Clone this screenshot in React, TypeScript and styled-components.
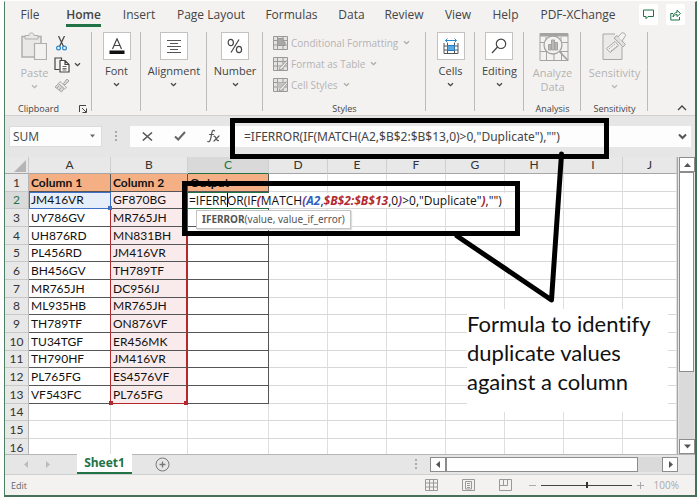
import React from "react";
import styled, { createGlobalStyle, css } from "styled-components";

const UI = '"Open Sans", "Noto Sans", sans-serif';
const CELL = 'Lato, "Open Sans", sans-serif';
const GREEN = "#217346";

const Global = createGlobalStyle`
  * { box-sizing: border-box; }
  body { margin: 0; background: #fdfdfd; font-family: ${UI}; color: #444; }
  button, input { font-family: inherit; color: inherit; }
  button { border: 0; padding: 0; background: none; }
`;

const Page = styled.main`
  position: relative;
  display: flex;
  height: 100vh;
  min-height: 480px;
  min-width: 680px;
  padding: 1px 3px 3px 4px;
  overflow: hidden;
`;

const Window = styled.div`
  flex: 1;
  min-width: 0;
  display: flex;
  flex-direction: column;
  background: #f3f2f1;
  border: 1px solid #4d8065;
  border-top-color: #f3f2f1;
  border-right: 2px solid #47705b;
  border-bottom: 2px solid #47705b;
`;

/* ---------- ribbon ---------- */

const TabRow = styled.nav`
  flex: none;
  display: flex;
  height: 30px;
  padding: 2px 10px 0 0;
`;

const Tab = styled.button<{ $w: number; $active?: boolean }>`
  flex: none;
  width: ${(p) => p.$w}px;
  height: 26px;
  display: flex;
  justify-content: center;
  font-size: 12px;
  line-height: 22px;
  white-space: nowrap;
  font-weight: ${(p) => (p.$active ? 600 : 400)};
  span {
    height: 23px;
    border-bottom: ${(p) => (p.$active ? `3px solid ${GREEN}` : "0")};
  }
`;

const TabActions = styled.div`
  margin-left: auto;
  display: flex;
  gap: 8px;
`;

const ActionButton = styled.button`
  display: grid;
  place-items: center;
  width: 19px;
  height: 21px;
  background: #fff;
  border-radius: 2px;
`;

const Ribbon = styled.div`
  flex: none;
  display: flex;
  height: 84px;
  padding-bottom: 4px;
  border-bottom: 1px solid #d2d0ce;
`;

const Group = styled.section<{ $w?: number }>`
  flex: ${(p) => (p.$w ? "none" : 1)};
  width: ${(p) => (p.$w ? `${p.$w}px` : "auto")};
  display: flex;
  flex-direction: column;
  align-items: center;
  padding-left: 1px;
  border-right: ${(p) => (p.$w ? "1px solid #bdbbb9" : "0")};
`;

const GroupBody = styled.div`
  flex: 1;
  display: flex;
`;

const GroupLabel = styled.div`
  display: flex;
  align-items: center;
  gap: 20px;
  font-size: 9px;
  line-height: 12px;
  height: 12px;
  margin-bottom: -4px;
  white-space: nowrap;
`;

const ClipGroup = styled(Group)`
  padding-left: 9px;
`;

const BigButton = styled.button<{ $off?: boolean }>`
  display: flex;
  flex-direction: column;
  align-items: center;
  font-size: 11px;
  line-height: 14px;
  color: ${(p) => (p.$off ? "#b5b3b1" : "#444")};
`;

const IconTile = styled.span<{ $plain?: boolean }>`
  display: grid;
  place-items: center;
  width: 28px;
  height: 28px;
  margin-bottom: ${(p) => (p.$plain ? 6 : 4)}px;
  background: ${(p) => (p.$plain ? "transparent" : "#fff")};
  border: ${(p) => (p.$plain ? "0" : "1px solid #c4c2c0")};
`;

const ChevronSlot = styled.span`
  height: 12px;
  display: grid;
  place-items: center;
`;

const ClipTools = styled.div`
  display: grid;
  grid-template-columns: 18px 14px;
  grid-auto-rows: 21px;
  align-items: center;
  justify-items: center;
  margin: 1px 0 0 4px;
`;

const IconButton = styled.button`
  display: grid;
  place-items: center;
`;

const Launcher = styled.button`
  display: grid;
  place-items: center;
`;

const StyleList = styled.div`
  display: flex;
  flex-direction: column;
  width: 143px;
`;

const StyleItem = styled.button`
  display: flex;
  align-items: center;
  gap: 3px;
  height: 21px;
  font-size: 10px;
  color: #b5b3b1;
  white-space: nowrap;
  svg:last-child { margin-left: 2px; }
`;

const CollapseSlot = styled.div`
  align-self: flex-end;
  margin-top: auto;
  padding: 0 8px 0 0;
`;

/* ---------- formula bar ---------- */

const FormulaBar = styled.div`
  flex: none;
  display: flex;
  align-items: center;
  height: 41px;
  padding: 0 4px 1px 4px;
  background: #e6e6e6;
`;

const NameBox = styled.div`
  display: flex;
  align-items: center;
  width: 93px;
  height: 21px;
  padding: 0 6px 0 3px;
  background: #fdfdfd;
  border: 1px solid #dcdcdc;
`;

const NameInput = styled.input`
  flex: 1;
  min-width: 0;
  padding: 0;
  border: 0;
  background: none;
  font-size: 12px;
`;

const Dots = styled.span`
  display: grid;
  place-items: center;
  width: 28px;
`;

const FormulaTools = styled.div`
  display: flex;
  justify-content: space-around;
  width: 102px;
  height: 21px;
  padding: 0 2px;
  background: #fdfdfd;
`;

const FormulaField = styled.div`
  flex: 1;
  display: flex;
  align-items: center;
  height: 21px;
  margin-left: 3px;
  padding: 0 4px 0 9px;
  background: #fdfdfd;
`;

const FormulaInput = styled.input`
  flex: 1;
  min-width: 0;
  padding: 0;
  border: 0;
  background: none;
  font-family: "Noto Sans", "Open Sans", sans-serif;
  font-size: 12px;
`;

/* ---------- sheet ---------- */

const SheetArea = styled.div`
  flex: 1;
  min-height: 0;
  display: flex;
  background: #e6e6e6;
`;

const SheetView = styled.div`
  flex: 1;
  min-width: 0;
  overflow: hidden;
  background: #fff;
  border-right: 1px solid #a6a6a6;
`;

const Grid = styled.table`
  width: 100%;
  table-layout: fixed;
  border-collapse: separate;
  border-spacing: 0;
  font-family: ${CELL};
  font-size: 12px;
  line-height: 16px;
  color: #111;
  tbody tr { height: 18px; }
  tbody tr:nth-child(3n + 2) { height: 17px; }
`;

const Col = styled.col<{ $w?: number }>`
  width: ${(p) => (p.$w ? `${p.$w}px` : "auto")};
`;

const ColHead = styled.th<{ $active?: boolean }>`
  height: 17px;
  padding: 0;
  font-weight: 400;
  color: ${(p) => (p.$active ? GREEN : "#333")};
  background: ${(p) => (p.$active ? "#d9d9d9" : "#e8e8e8")};
  border-right: 1px solid #cfcfcf;
  border-bottom: 1px solid ${(p) => (p.$active ? GREEN : "#a6a6a6")};
`;

const Corner = styled.td`
  padding: 0;
  background: #e8e8e8;
  border-right: 1px solid #c8c8c8;
  border-bottom: 1px solid #a6a6a6;
  svg { display: block; margin: 2px 2px 0 auto; }
`;

const RowHead = styled.th<{ $active?: boolean }>`
  padding: 0;
  line-height: 14px;
  font-size: 12px;
  font-weight: 400;
  color: ${(p) => (p.$active ? GREEN : "#333")};
  background: ${(p) => (p.$active ? "#dadada" : "#e8e8e8")};
  border-right: 1px solid #b5b5b5;
  border-bottom: 1px solid #c8c8c8;
`;

type CellKind = "plain" | "data" | "head" | "ref" | "range" | "edit" | "out";

const Cell = styled.td<{ $kind: CellKind; $last?: boolean }>`
  position: relative;
  padding: 0 0 0 2px;
  line-height: 14px;
  white-space: nowrap;
  border-right: 1px solid #dedede;
  border-bottom: 1px solid #d8d8d8;
  ${(p) => p.$kind !== "plain" && css`border-color: #555;`}
  ${(p) => p.$kind === "head" && css`background: #f4b084; font-weight: 700;`}
  ${(p) => p.$kind === "data" && css`border-right-color: #b3272d;`}
  ${(p) => p.$kind === "ref" && css`
    background: #e6eefa;
    border-bottom-color: #3f6fc4;
    border-right-color: #3f6fc4;
    box-shadow: inset 1px 1px #3f6fc4;
  `}
  ${(p) => p.$kind === "range" && css`
    background: #f9eaeb;
    border-right: 2px solid #b3272d;
    ${p.$last ? "border-bottom-color: #b3272d;" : ""}
  `}
  ${(p) => p.$kind === "edit" && css`
    border-bottom-color: ${GREEN};
    box-shadow: inset 0 1px ${GREEN};
  `}
`;

const Handle = styled.i<{ $c: string; $right?: boolean }>`
  position: absolute;
  bottom: -2px;
  ${(p) => (p.$right ? "right: -2px;" : "left: -2px;")}
  width: 4px;
  height: 4px;
  background: ${(p) => p.$c};
  z-index: 1;
`;

const CellEditor = styled.div`
  position: absolute;
  left: 0;
  top: 1px;
  z-index: 2;
  height: 15px;
  padding: 0 4px 0 1px;
  font-family: ${UI};
  line-height: 15px;
  background: #fff;
  white-space: nowrap;
`;

const Token = styled.span<{ $c: string }>`
  color: ${(p) => p.$c};
  font-weight: 700;
  font-style: italic;
`;

const Caret = styled.span`
  display: inline-block;
  width: 1px;
  height: 14px;
  margin-right: -1px;
  vertical-align: top;
  background: #000;
`;

const FunctionTip = styled.div`
  position: absolute;
  left: 8px;
  top: 18px;
  z-index: 3;
  padding: 0 5px 0 5px;
  height: 19px;
  font-family: "Noto Sans", "Open Sans", sans-serif;
  font-size: 10px;
  line-height: 17px;
  color: #555;
  background: #fff;
  border: 1px solid #c4c4c4;
  box-shadow: 1px 1px 1px #ddd;
`;

/* ---------- scroll bars ---------- */

const VScroll = styled.div`
  flex: none;
  display: flex;
  flex-direction: column;
  width: 17px;
  padding: 0 1px 0 1px;
`;

const HScroll = styled.div`
  display: flex;
  width: 248px;
  height: 15px;
`;

const ScrollButton = styled.button`
  flex: none;
  display: grid;
  place-items: center;
  width: 16px;
  height: 15px;
  background: #fff;
  border: 1px solid #8c8c8c;
`;

const Track = styled.div<{ $vertical?: boolean }>`
  flex: 1;
  display: flex;
  flex-direction: ${(p) => (p.$vertical ? "column" : "row")};
  background: #dadada;
`;

const Thumb = styled.div<{ $share: number }>`
  flex: 0 0 ${(p) => p.$share}%;
  background: #fff;
  border: 1px solid #8c8c8c;
`;

/* ---------- bottom bars ---------- */

const SheetBar = styled.div`
  flex: none;
  display: flex;
  align-items: center;
  height: 21px;
  padding-right: 17px;
  background: #e6e6e6;
  border-top: 1px solid #b5b5b5;
  border-bottom: 1px solid #cfcfcf;
`;

const SheetNav = styled.div`
  display: flex;
  justify-content: center;
  gap: 14px;
  width: 72px;
  padding-right: 8px;
`;

const SheetTab = styled.button`
  align-self: flex-start;
  width: 55px;
  height: 20px;
  margin-top: -1px;
  font-size: 12px;
  line-height: 18px;
  font-weight: 700;
  color: ${GREEN};
  background: #fff;
  border-bottom: 2px solid ${GREEN};
`;

const AddSheet = styled.button`
  display: grid;
  margin-left: 23px;
`;

const Spacer = styled.div`
  flex: 1;
`;

const StatusBar = styled.footer`
  flex: none;
  display: flex;
  align-items: center;
  height: 20px;
  padding: 0 16px 0 6px;
  font-size: 9px;
  color: #666;
`;

const Views = styled.div`
  display: flex;
  gap: 24px;
  margin-right: 17px;
`;

const ZoomRange = styled.input`
  appearance: none;
  width: 91px;
  height: 10px;
  margin: 0 5px;
  background: linear-gradient(#444, #444) center / 100% 1px no-repeat;
  &::-webkit-slider-thumb {
    appearance: none;
    width: 2px;
    height: 6px;
    background: #333;
  }
`;

const ZoomText = styled.span`
  width: 35px;
  text-align: right;
  font-size: 10px;
  color: #aaa;
`;

/* ---------- annotations ---------- */

const Frame = styled.div<{ $x: number; $y: number; $w: number; $h: number }>`
  position: absolute;
  left: ${(p) => p.$x}px;
  top: ${(p) => p.$y}px;
  width: ${(p) => p.$w}px;
  height: ${(p) => p.$h}px;
  border: 5px solid #000;
  pointer-events: none;
  z-index: 5;
`;

const Pointer = styled.svg`
  position: absolute;
  left: 450px;
  top: 145px;
  z-index: 6;
  pointer-events: none;
`;

const Note = styled.p`
  position: absolute;
  left: 467px;
  top: 309px;
  width: 201px;
  height: 103px;
  margin: 0;
  background: #fff;
  font-family: ${CELL};
  font-size: 22px;
  line-height: 29px;
  font-variant-ligatures: none;
  color: #111;
  white-space: nowrap;
  z-index: 4;
`;

/* ---------- icons ---------- */

const Chevron = ({ color = "#444", w = 7 }: { color?: string; w?: number }) => (
  <svg width={w} height={w} viewBox="0 0 7 7" fill="none" stroke={color} strokeWidth="1.3">
    <path d="M1 2.2 3.5 4.6 6 2.2" />
  </svg>
);

const Arrow = ({ dir, color = "#555" }: { dir: "up" | "down" | "left" | "right"; color?: string }) => {
  const d = { up: "M0 6 3.5 2 7 6z", down: "M0 1.5h7L3.5 5.5z", left: "M5 0v7L1 3.5z", right: "M2 0v7l4-3.5z" }[dir];
  return <svg width="7" height="7" viewBox="0 0 7 7"><path d={d} fill={color} /></svg>;
};

const PasteIcon = () => (
  <svg width="26" height="28" viewBox="0 0 26 28" fill="#e9e8e7" stroke="#b0aeac">
    <path d="M1 4.5H20V25H1z" strokeWidth="1.5" />
    <path d="M4 7V3.5H8C8 0 13 0 13 3.5H17V7z" />
    <path d="M13.5 11.5H25.5V27.5H13.5z" fill="#f3f2f1" strokeWidth="1.2" />
  </svg>
);
const ScissorsIcon = () => (
  <svg width="11" height="15" viewBox="0 0 11 15" fill="none">
    <path d="M2.5 0 7.5 10.5M8.5 0 3.5 10.5" stroke="#444" strokeWidth="1.2" />
    <circle cx="2.5" cy="12" r="1.9" stroke="#2b88c8" strokeWidth="1.2" />
    <circle cx="8.5" cy="12" r="1.9" stroke="#2b88c8" strokeWidth="1.2" />
  </svg>
);
const CopyIcon = () => (
  <svg width="16" height="16" viewBox="0 0 16 16" fill="none" stroke="#444" strokeWidth="1.2">
    <path d="M5.5 12.5H1V1H7.5V3" />
    <path d="M6 3.5H11L15 7.5V15H6zM11 3.5V7.5H15" fill="#fff" />
    <path d="M8.5 9.5H12.5M8.5 11.5H12.5M8.5 13H12.5" strokeWidth=".8" />
  </svg>
);
const BrushIcon = () => (
  <svg width="16" height="15" viewBox="0 0 16 15" fill="#d8d7d6" stroke="#aaa8a6">
    <path d="M9.5 5.5 13 1 15 3 11 7z" />
    <path d="M6 3.5 12.5 9.5 10.5 11 4.5 5.5z" fill="#f3f2f1" />
    <path d="M4.5 5.5 10 10.5 7.5 14 1 9z" />
    <path d="M3 10 5 8M5 12 7.5 9.5" />
  </svg>
);
const FontIcon = () => (
  <svg width="16" height="17" viewBox="0 0 16 17" fill="none">
    <path d="M3.5 11 8 .8 12.5 11M5 7.5H11" stroke="#444" strokeWidth="1.2" />
    <path d="M.5 12.5H15.5V16H.5z" fill="#111" />
  </svg>
);
const AlignIcon = () => (
  <svg width="14" height="14" viewBox="0 0 14 14" stroke="#555" strokeWidth="1">
    <path d="M0 1.500H14M3 4.500H11M0 7.500H14M3 10.500H11M0 13.500H14" />
  </svg>
);
const PercentIcon = () => (
  <svg width="16" height="16" viewBox="0 0 16 16" fill="none" stroke="#444" strokeWidth="1.2">
    <ellipse cx="3.8" cy="4.5" rx="2.6" ry="3.2" />
    <ellipse cx="12" cy="11.5" rx="2.6" ry="3.2" />
    <path d="M12 1.5 4 14.5" />
  </svg>
);
const CellsIcon = () => (
  <svg width="16" height="17" viewBox="0 0 16 17" fill="none">
    <path d="M1 5V15.5H15V5M1 8H15M1 12H15M4.5 5V15.5M11.5 5V15.5" stroke="#555" />
    <path d="M4.5 7.5H11.5V12.5H4.5z" fill="#5aa9e0" stroke="#2b78b8" />
    <path d="M2.5 2.5H13.5M4.5.5 2.5 2.5 4.5 4.5M11.5.5 13.5 2.5 11.5 4.5" stroke="#2b88c8" />
  </svg>
);
const SearchIcon = () => (
  <svg width="16" height="16" viewBox="0 0 16 16" fill="none" stroke="#444" strokeWidth="1.2">
    <circle cx="10" cy="5.8" r="4.7" />
    <path d="M6.5 9 1 15" />
  </svg>
);
const AnalyzeIcon = () => (
  <svg width="30" height="30" viewBox="0 0 30 30" fill="none" stroke="#a5a3a1">
    <path d="M1 1.5H29V28.5H1z" />
    <path d="M1 3H29" strokeWidth="3" />
    <path d="M1 10.5H29M1 19.5H29M7.5 19V28M15 19V28M22.5 19V28M22 5V12M7 5V12" />
    <circle cx="14" cy="13" r="9" fill="#f3f2f1" strokeWidth="1.3" />
    <path d="M9.5 12.5H12V18H9.500zM12.5 8H15.5V18H12.5zM16 10.5H18.5V18H16z" fill="#bbb9b7" />
    <path d="M20.5 19.5 29 28.5" strokeWidth="1.8" />
  </svg>
);
const SensitivityIcon = () => (
  <svg width="25" height="28" viewBox="0 0 25 28" fill="none" stroke="#a9a7a5">
    <path d="M13 2H1V27.5H20V15" fill="#eceae9" />
    <path d="M4.5 16.5 13 9.5 16.5 13.5 8 20.5z" fill="#f3f2f1" />
    <path d="M7 17 13 12M9 19 15 14" strokeDasharray="2 1" />
    <path d="M12 6 15 3.5 23.5 12.5 21 15z" fill="#e0dfde" />
    <path d="M16 5 19 1.5C21.5-.5 24.5 2 23 4.5L20 9" fill="#f3f2f1" />
  </svg>
);
const TableIcon = ({ kind }: { kind: "cond" | "table" | "cell" }) => (
  <svg width="15" height="14" viewBox="0 0 15 14" fill="none" stroke="#9b9997">
    <path d="M.5.5H14.5V13.5H.5z" fill="#e4e3e2" />
    <path d="M.5 4.5H14.5M.5 9H14.5M4.5.5V13.5M10 .5V13.5" />
    {kind === "cond" && <path d="M4.5 2.5H10V6H12V9.5H4.5z" fill="#aaa8a6" />}
    {kind === "cell" && <path d="M4.5 4.5H12V10H4.5z" fill="#c5c3c1" stroke="none" />}
    {kind !== "cond" && <path d="M6 13.5 7 10.5 14 3.5 14.8 5 9 12z" fill="#f3f2f1" />}
  </svg>
);
const CommentIcon = () => (
  <svg width="11" height="11" viewBox="0 0 11 11" fill="none" stroke={GREEN}>
    <path d="M.5 1H10.5V7.5H5L3 9.8V7.5H.5z" />
  </svg>
);
const ShareIcon = () => (
  <svg width="11" height="12" viewBox="0 0 11 12" fill="none" stroke={GREEN}>
    <path d="M3 4.5H.8V11H9.5V8" />
    <path d="M3 8C3 5 5 3.5 7 3.5V1.2L10.5 4.5 7 7.5V5.5C5 5.5 4 6.5 3 8z" />
  </svg>
);
const LauncherIcon = () => (
  <svg width="8" height="8" viewBox="0 0 8 8" fill="none" stroke="#444">
    <path d="M.5 7V.5H7M3 3 7 7M7.5 3.5V7.5H3.5" />
  </svg>
);
const FxIcon = () => (
  <svg width="13" height="15" viewBox="0 0 13 15" fill="none" stroke="#555" strokeWidth="1.2" strokeLinecap="round">
    <path d="M7.5 1.8C5.5.2 5 2.5 4.5 5.5S3.3 14 .8 12.5M2.5 5.5H6.5" />
    <path d="M7 7.2C9 6.5 9 12.5 11.5 11.5M12 7 7 12" />
  </svg>
);
const ViewIcon = ({ kind }: { kind: "grid" | "page" | "break" }) => (
  <svg width="13" height="12" viewBox="0 0 13 12" fill="none" stroke="#999">
    <path d="M.5.5H12.5V11.5H.5z" />
    {kind === "grid" && <path d="M.5 4H12.5M.5 8H12.5M4.5.5V11.5M8.5.5V11.5" />}
    {kind === "page" && <path d="M3.5 2.5H9.5V10H3.5zM5 4.5H8M5 6.5H8M5 8.5H8" />}
    {kind === "break" && <path d="M4.5.5V6.5M8.5.5V6.5H.5" />}
  </svg>
);

/* ---------- data ---------- */

const TABS: [string, number][] = [
  ["File", 50], ["Home", 57], ["Insert", 54], ["Page Layout", 90], ["Formulas", 71],
  ["Data", 49], ["Review", 56], ["View", 52], ["Help", 43], ["PDF-XChange", 102],
];

const ROWS: [string, string][] = [
  ["Column 1", "Column 2"], ["JM416VR", "GF870BG"], ["UY786GV", "MR765JH"], ["UH876RD", "MN831BH"],
  ["PL456RD", "JM416VR"], ["BH456GV", "TH789TF"], ["MR765JH", "DC956IJ"], ["ML935HB", "MR765JH"],
  ["TH789TF", "ON876VF"], ["TU34TGF", "ER456MK"], ["TH790HF", "JM416VR"], ["PL765FG", "ES4576VF"],
  ["VF543FC", "PL765FG"],
];

const LETTERS = ["A", "B", "C", "D", "E", "F", "G", "H", "I", "J"];
const WIDTHS = [24, 82, 77, 81, 59, 59, 59, 59, 59, 59];
const FORMULA = '=IFERROR(IF(MATCH(A2,$B$2:$B$13,0)>0,"Duplicate"),"")';

function Big({ w, label, icon }: { w: number; label: string; icon: React.ReactNode }) {
  return (
    <Group $w={w}>
      <BigButton>
        <IconTile>{icon}</IconTile>
        {label}
        <ChevronSlot><Chevron /></ChevronSlot>
      </BigButton>
    </Group>
  );
}

function SheetRow({ n }: { n: number }) {
  const row = ROWS[n - 1];
  const empty = (count: number) => Array.from({ length: count }, (_, i) => <Cell key={i} $kind="plain" />);
  return (
    <tr>
      <RowHead scope="row" $active={n === 2}>{n}</RowHead>
      {!row && empty(10)}
      {row && (
        <>
          <Cell $kind={n === 1 ? "head" : n === 2 ? "ref" : "data"}>
            {row[0]}
            {n === 2 && <Handle $c="#3f6fc4" $right />}
          </Cell>
          <Cell $kind={n === 1 ? "head" : "range"} $last={n === 13}>
            {row[1]}
            {n === 13 && <><Handle $c="#b3272d" /><Handle $c="#b3272d" $right /></>}
          </Cell>
          <Cell $kind={n === 1 ? "head" : n === 2 ? "edit" : "out"}>
            {n === 1 && "Output"}
            {n === 2 && (
              <>
                <CellEditor role="textbox" aria-label="Cell C2">
                  =IFERR<Caret />OR(IF<Token $c="#b3272d">(</Token>MATCH<Token $c="#7a3fa8">(</Token>
                  <Token $c="#2f62bd">A2</Token>,<Token $c="#b3272d">$B$2:$B$13</Token>,0
                  <Token $c="#7a3fa8">)</Token>&gt;0,"Duplicate"<Token $c="#b3272d">)</Token>,"")
                </CellEditor>
                <FunctionTip role="tooltip"><b>IFERROR</b>(value, value_if_error)</FunctionTip>
              </>
            )}
          </Cell>
          {empty(7)}
        </>
      )}
    </tr>
  );
}

export default function App() {
  return (
    <Page>
      <Global />
      <Window>
        <TabRow>
          {TABS.map(([name, w]) => (
            <Tab key={name} $w={w} $active={name === "Home"}><span>{name}</span></Tab>
          ))}
          <TabActions>
            <ActionButton aria-label="Comments"><CommentIcon /></ActionButton>
            <ActionButton aria-label="Share"><ShareIcon /></ActionButton>
          </TabActions>
        </TabRow>

        <Ribbon>
          <ClipGroup $w={87}>
            <GroupBody>
              <BigButton $off>
                <IconTile $plain><PasteIcon /></IconTile>
                Paste
                <ChevronSlot><Chevron color="#b5b3b1" /></ChevronSlot>
              </BigButton>
              <ClipTools>
                <IconButton aria-label="Cut"><ScissorsIcon /></IconButton><span />
                <IconButton aria-label="Copy"><CopyIcon /></IconButton>
                <IconButton aria-label="Copy options"><Chevron /></IconButton>
                <IconButton aria-label="Format painter"><BrushIcon /></IconButton>
              </ClipTools>
            </GroupBody>
            <GroupLabel>Clipboard<Launcher aria-label="Clipboard settings"><LauncherIcon /></Launcher></GroupLabel>
          </ClipGroup>
          <Big w={49} label="Font" icon={<FontIcon />} />
          <Big w={66} label="Alignment" icon={<AlignIcon />} />
          <Big w={56} label="Number" icon={<PercentIcon />} />
          <Group $w={163}>
            <GroupBody>
              <StyleList>
                <StyleItem><TableIcon kind="cond" />Conditional Formatting<Chevron color="#aaa" /></StyleItem>
                <StyleItem><TableIcon kind="table" />Format as Table<Chevron color="#aaa" /></StyleItem>
                <StyleItem><TableIcon kind="cell" />Cell Styles<Chevron color="#aaa" /></StyleItem>
              </StyleList>
            </GroupBody>
            <GroupLabel>Styles</GroupLabel>
          </Group>
          <Big w={49} label="Cells" icon={<CellsIcon />} />
          <Big w={49} label="Editing" icon={<SearchIcon />} />
          <Group $w={57}>
            <GroupBody>
              <BigButton $off><IconTile $plain><AnalyzeIcon /></IconTile>Analyze<br />Data</BigButton>
            </GroupBody>
            <GroupLabel>Analysis</GroupLabel>
          </Group>
          <Group $w={67}>
            <GroupBody>
              <BigButton $off>
                <IconTile $plain><SensitivityIcon /></IconTile>
                Sensitivity
                <ChevronSlot><Chevron color="#b5b3b1" /></ChevronSlot>
              </BigButton>
            </GroupBody>
            <GroupLabel>Sensitivity</GroupLabel>
          </Group>
          <Group>
            <CollapseSlot>
              <IconButton aria-label="Collapse ribbon">
                <svg width="10" height="6" viewBox="0 0 10 6" fill="none" stroke="#444" strokeWidth="1.3"><path d="M1 5 5 1 9 5" /></svg>
              </IconButton>
            </CollapseSlot>
          </Group>
        </Ribbon>

        <FormulaBar>
          <NameBox>
            <NameInput aria-label="Name box" defaultValue="SUM" />
            <IconButton aria-label="Names">
              <svg width="5" height="4" viewBox="0 0 5 4"><path d="M0 .5H5L2.5 3.5z" fill="#666" /></svg>
            </IconButton>
          </NameBox>
          <Dots>
            <svg width="2" height="11" viewBox="0 0 2 11" fill="#aaa"><path d="M0 0h2v2H0zM0 4h2v2H0zM0 8h2v2H0z" /></svg>
          </Dots>
          <FormulaTools>
            <IconButton aria-label="Cancel">
              <svg width="11" height="9" viewBox="0 0 11 9" stroke="#555" strokeWidth="1.5"><path d="M.8.5 10 8.5M10 .5.8 8.5" /></svg>
            </IconButton>
            <IconButton aria-label="Enter">
              <svg width="12" height="10" viewBox="0 0 12 10" fill="none" stroke="#666" strokeWidth="2"><path d="M1 5.5 4.2 8.5 11 1" /></svg>
            </IconButton>
            <IconButton aria-label="Insert function"><FxIcon /></IconButton>
          </FormulaTools>
          <FormulaField>
            <FormulaInput aria-label="Formula" defaultValue={FORMULA} />
            <IconButton aria-label="Expand formula bar">
              <svg width="9" height="7" viewBox="0 0 9 7" fill="none" stroke="#555" strokeWidth="2"><path d="M1 1.5 4.5 5 8 1.5" /></svg>
            </IconButton>
          </FormulaField>
        </FormulaBar>

        <SheetArea>
          <SheetView>
            <Grid>
              <colgroup>
                {WIDTHS.map((w, i) => <Col key={i} $w={w} />)}
                <Col />
              </colgroup>
              <thead>
                <tr>
                  <Corner>
                    <svg width="12" height="12" viewBox="0 0 12 12"><path d="M12 0V12H0z" fill="#b5b5b5" /></svg>
                  </Corner>
                  {LETTERS.map((l) => <ColHead key={l} scope="col" $active={l === "C"}>{l}</ColHead>)}
                </tr>
              </thead>
              <tbody>
                {Array.from({ length: 16 }, (_, i) => <SheetRow key={i} n={i + 1} />)}
              </tbody>
            </Grid>
          </SheetView>
          <VScroll>
            <ScrollButton aria-label="Scroll up"><Arrow dir="up" /></ScrollButton>
            <Track $vertical><Thumb $share={75} /></Track>
            <ScrollButton aria-label="Scroll down"><Arrow dir="down" /></ScrollButton>
          </VScroll>
        </SheetArea>

        <SheetBar>
          <SheetNav>
            <IconButton aria-label="Previous sheet"><Arrow dir="left" color="#bbb" /></IconButton>
            <IconButton aria-label="Next sheet"><Arrow dir="right" color="#bbb" /></IconButton>
          </SheetNav>
          <SheetTab>Sheet1</SheetTab>
          <AddSheet aria-label="New sheet">
            <svg width="15" height="15" viewBox="0 0 15 15" fill="none" stroke="#777">
              <circle cx="7.5" cy="7.5" r="6.5" />
              <path d="M4.5 7.5H10.5M7.5 4.5V10.5" strokeWidth="1.3" />
            </svg>
          </AddSheet>
          <Spacer />
          <Dots>
            <svg width="2" height="11" viewBox="0 0 2 11" fill="#aaa"><path d="M0 0h2v2H0zM0 4h2v2H0zM0 8h2v2H0z" /></svg>
          </Dots>
          <HScroll>
            <ScrollButton aria-label="Scroll left"><Arrow dir="left" /></ScrollButton>
            <Track><Thumb $share={89} /></Track>
            <ScrollButton aria-label="Scroll right"><Arrow dir="right" /></ScrollButton>
          </HScroll>
        </SheetBar>

        <StatusBar>
          Edit
          <Spacer />
          <Views>
            <IconButton aria-label="Normal view"><ViewIcon kind="grid" /></IconButton>
            <IconButton aria-label="Page layout view"><ViewIcon kind="page" /></IconButton>
            <IconButton aria-label="Page break view"><ViewIcon kind="break" /></IconButton>
          </Views>
          <IconButton aria-label="Zoom out">
            <svg width="7" height="7" viewBox="0 0 7 7" stroke="#aaa"><path d="M0 3.5H7" /></svg>
          </IconButton>
          <ZoomRange type="range" aria-label="Zoom" defaultValue={50} />
          <IconButton aria-label="Zoom in">
            <svg width="7" height="7" viewBox="0 0 7 7" stroke="#aaa"><path d="M0 3.5H7M3.5 0V7" /></svg>
          </IconButton>
          <ZoomText>100%</ZoomText>
        </StatusBar>
      </Window>

      <Frame $x={230} $y={118} $w={379} $h={41} />
      <Frame $x={182} $y={181} $w={338} $h={55} />
      <Note>Formula to identify<br />duplicate values<br />against a column</Note>
      <Pointer width="120" height="165" viewBox="0 0 120 165" fill="none" stroke="#000" strokeWidth="5" strokeLinecap="round" strokeLinejoin="round">
        <path d="M111.5 9 101.5 155 7 91" />
      </Pointer>
    </Page>
  );
}
